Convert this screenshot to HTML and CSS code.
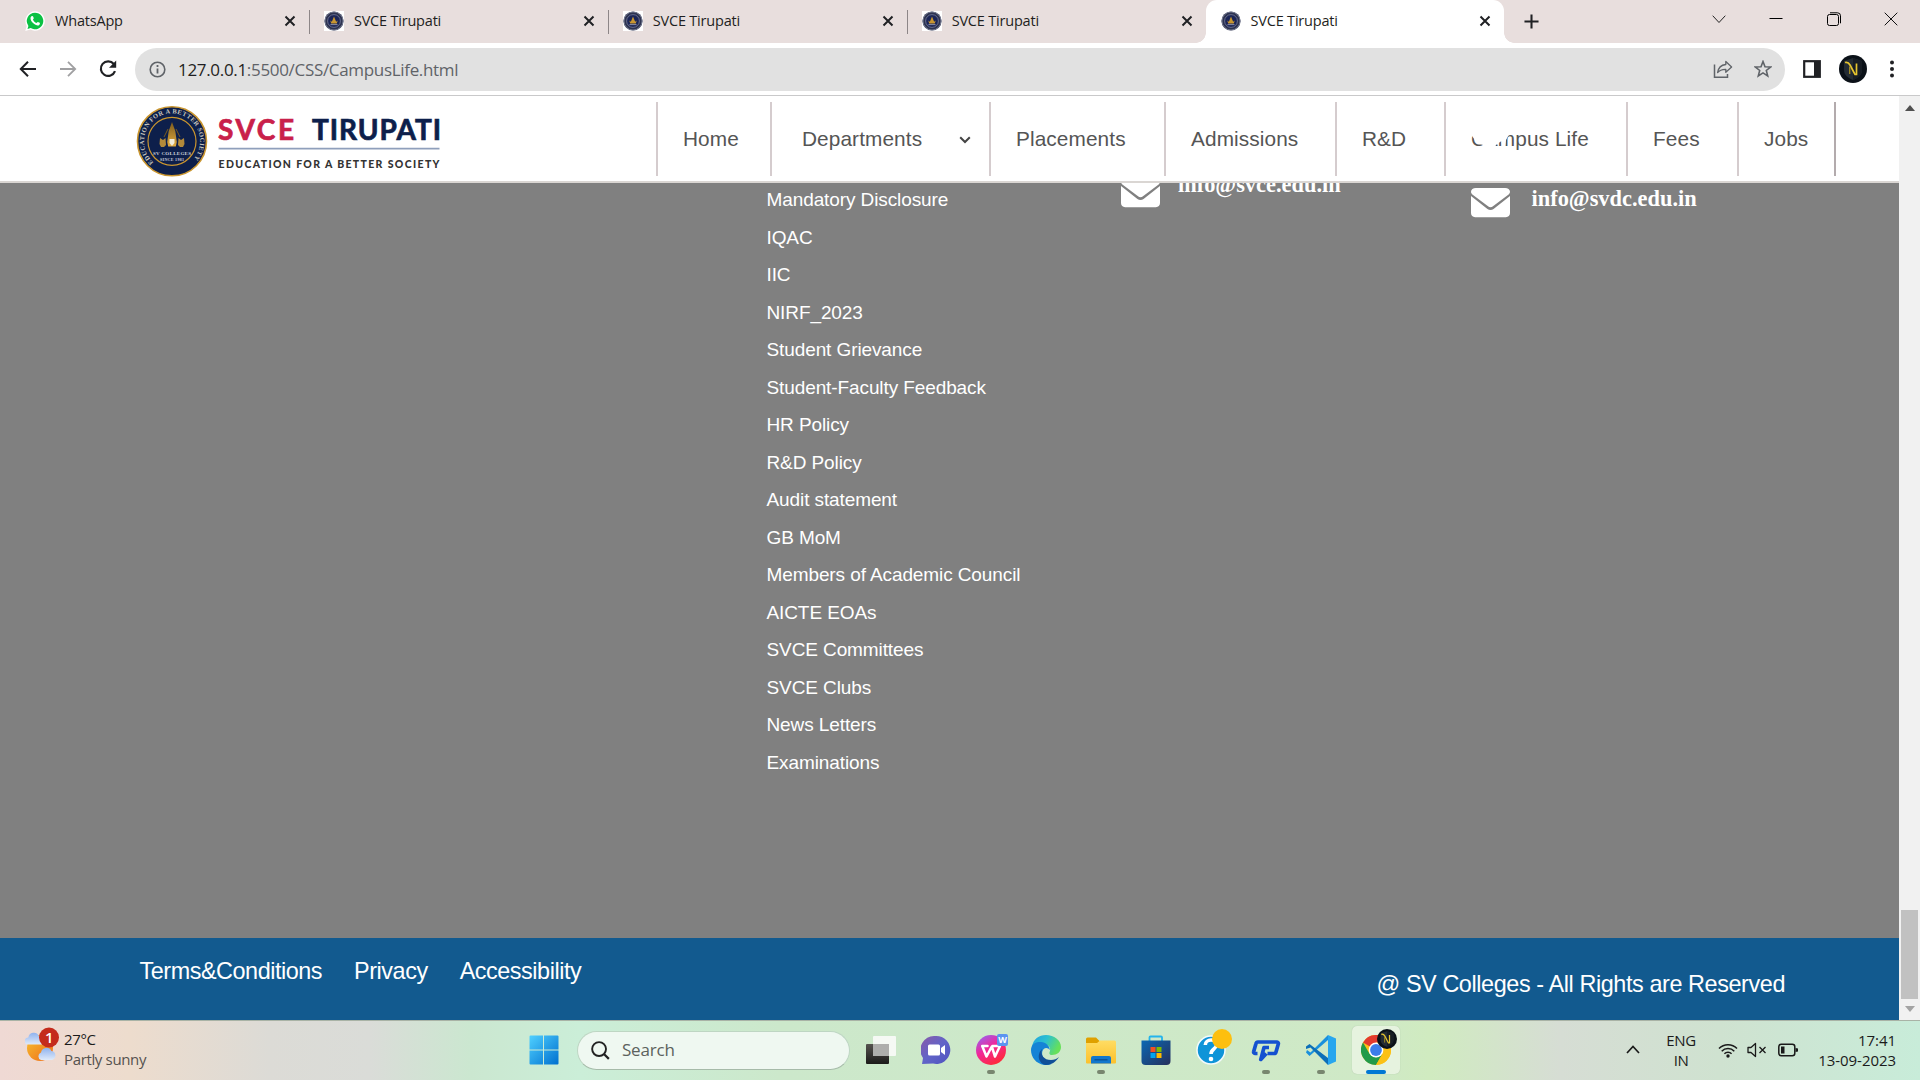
FILE: index.html
```html
<!DOCTYPE html>
<html lang="en">
<head>
<meta charset="utf-8">
<title>SVCE Tirupati</title>
<link rel="stylesheet" href="styles.css">
</head>
<body>
<svg class="defs" width="0" height="0" aria-hidden="true">
  <defs>
    <linearGradient id="gWin" x1="0" y1="0" x2="1" y2="1"><stop offset="0" stop-color="#4fd0ff"/><stop offset="1" stop-color="#0070cf"/></linearGradient>
    <linearGradient id="gChat" x1="0" y1="0" x2="1" y2="1"><stop offset="0" stop-color="#8a5aa8"/><stop offset=".5" stop-color="#6264c8"/><stop offset="1" stop-color="#4f52c0"/></linearGradient>
    <linearGradient id="gWps" x1="0" y1="0" x2=".6" y2="1"><stop offset="0" stop-color="#8a6bff"/><stop offset=".5" stop-color="#f0289a"/><stop offset="1" stop-color="#ff2a3c"/></linearGradient>
    <linearGradient id="gEdge" x1="0" y1="0" x2="1" y2=".4"><stop offset="0" stop-color="#1f9fe0"/><stop offset=".5" stop-color="#2cc0d0"/><stop offset="1" stop-color="#66e05a"/></linearGradient>
    <linearGradient id="gFold" x1="0" y1="0" x2="0" y2="1"><stop offset="0" stop-color="#ffdc63"/><stop offset="1" stop-color="#fcc12c"/></linearGradient>
    <linearGradient id="gStore" x1="0" y1="0" x2="1" y2="1"><stop offset="0" stop-color="#0a68b4"/><stop offset="1" stop-color="#27305c"/></linearGradient>
    <linearGradient id="gTv" x1="0" y1="0" x2="0" y2="1"><stop offset="0" stop-color="#55534f"/><stop offset="1" stop-color="#1c1b1a"/></linearGradient>
    <linearGradient id="gSun" x1="0" y1="0" x2="1" y2="1"><stop offset="0" stop-color="#f7c12f"/><stop offset="1" stop-color="#ee6a1a"/></linearGradient>
    <linearGradient id="gCloud" x1="0" y1="0" x2="0" y2="1"><stop offset="0" stop-color="#8fb2ee"/><stop offset="1" stop-color="#dfeafa"/></linearGradient>
    <linearGradient id="gGold" x1="0" y1="0" x2="0" y2="1"><stop offset="0" stop-color="#7c5b1c"/><stop offset="1" stop-color="#e2ab3f"/></linearGradient>
    <symbol id="close" viewBox="0 0 12 12"><path d="M1.500 1.500l9 9M10.500 1.500l-9 9" stroke="#202124" stroke-width="2" fill="none"/></symbol>
    <symbol id="favicon" viewBox="0 0 20 20">
      <circle cx="10" cy="10" r="9.600" fill="#2d3350"/><circle cx="10" cy="10" r="9" fill="none" stroke="#8e92a6" stroke-width=".7"/>
      <circle cx="10" cy="10" r="6.400" fill="#1b2556" stroke="#777c9c" stroke-width=".8"/>
      <path d="M10 5.500l1.300 3.200 1 2.300H7.700l1-2.300zM6.300 9.500l1.700 1.500h4l1.700-1.500-.9 3H7.200z" fill="#c9962f"/><path d="M6.500 13.600h7" stroke="#aab" stroke-width=".8"/>
    </symbol>
    <symbol id="avatar" viewBox="0 0 28 28">
      <circle cx="14" cy="14" r="14" fill="#0b1118"/><path d="M14 3l9 3v9c0 5-4 8-9 10-5-2-9-5-9-10V6z" fill="#242c34"/><path d="M14 3l9 3v9c0 5-4 8-9 10z" fill="#171d24"/>
      <path d="M6 7.500c2.500-.8 3.800.3 5 2.500l5 9.500h1.500V8.500" fill="none" stroke="#e6c52f" stroke-width="1.700"/><path d="M10.700 19V11.500" stroke="#a58c22" stroke-width="1.300"/>
    </symbol>
    <symbol id="envelope" viewBox="0 64 512 384"><path fill="#fff" d="M64 64C28 64 0 85 0 116c0 14 7 26 18 34l210 158c17 13 39 13 56 0l210-158c11-8 18-20 18-34 0-31-28-52-64-52zM0 172v222c0 33 22 54 54 54h404c32 0 54-21 54-54V172L296 342c-24 18-56 18-80 0z"/></symbol>
  </defs>
</svg>

<div class="tabstrip">
  <div class="tab"><svg class="fav" viewBox="0 0 20 20"><path d="M10 .3a9.700 9.700 0 1 1-4.600 18.200L.3 19.900l1.400-5A9.700 9.700 0 0 1 10 .3z" fill="#fff"/><path d="M10 1.700a8.300 8.300 0 1 1-4.300 15.400L2.500 18l.9-3.100A8.300 8.300 0 0 1 10 1.700z" fill="#0bc143"/><path d="M6.500 5.300c.7-.5 1.300-.4 1.600.3l.6 1.500c.2.600-.7 1.200-.7 1.600.7 1.500 1.900 2.600 3.400 3.200.5 0 1-1.200 1.500-1l1.800.9c.6.300-.1 2-.8 2.400-2.500 1.200-8.600-3.200-8.400-7.200.1-.7.400-1.300 1-1.700z" fill="#fff"/></svg><span class="tab-title">WhatsApp</span><svg class="x"><use href="#close"/></svg></div>
  <div class="tab"><svg class="fav boxed"><use href="#favicon"/></svg><span class="tab-title">SVCE Tirupati</span><svg class="x"><use href="#close"/></svg></div>
  <div class="tab"><svg class="fav boxed"><use href="#favicon"/></svg><span class="tab-title">SVCE Tirupati</span><svg class="x"><use href="#close"/></svg></div>
  <div class="tab last"><svg class="fav boxed"><use href="#favicon"/></svg><span class="tab-title">SVCE Tirupati</span><svg class="x"><use href="#close"/></svg></div>
  <div class="tab active"><svg class="fav"><use href="#favicon"/></svg><span class="tab-title">SVCE Tirupati</span><svg class="x"><use href="#close"/></svg></div>
  <svg class="plus" viewBox="0 0 16 16"><path d="M8 .5v15M.5 8h15" stroke="#202124" stroke-width="2.200"/></svg>
  <div class="window-controls">
    <svg viewBox="0 0 14 14"><path d="M.7 3.700L7 10.500l6.300-6.800" fill="none" stroke="#222"/></svg>
    <svg viewBox="0 0 14 14"><path d="M.5 6.500h13" stroke="#000"/></svg>
    <svg viewBox="0 0 14 14"><rect x=".5" y="2.500" width="11" height="11" rx="2" fill="none" stroke="#000"/><path d="M3 .8h7.500a3 3 0 0 1 3 3v7.500" fill="none" stroke="#000"/></svg>
    <svg viewBox="0 0 14 14"><path d="M.7.7l12.600 12.600M13.300.7L.7 13.300" stroke="#111"/></svg>
  </div>
</div>

<div class="toolbar">
  <div class="history">
    <svg viewBox="0 0 18 18"><path d="M17 9H2M9 1.800L1.800 9 9 16.200" fill="none" stroke="#202124" stroke-width="2"/></svg>
    <svg viewBox="0 0 18 18"><path d="M1 9h15M9 1.800L16.200 9 9 16.200" fill="none" stroke="#a0a0a2" stroke-width="1.800"/></svg>
    <svg viewBox="0 0 18 18"><path d="M14.800 4A7.300 7.300 0 1 0 16 11.200" fill="none" stroke="#202124" stroke-width="2.200"/><path d="M17.200.6v7.200H10z" fill="#202124"/></svg>
  </div>
  <div class="omnibox">
    <svg class="info" viewBox="0 0 17 17"><circle cx="8.500" cy="8.500" r="7.300" fill="none" stroke="#5f6368" stroke-width="1.600"/><path d="M8.500 7.500v5M8.500 4v2" stroke="#5f6368" stroke-width="1.800"/></svg>
    <span class="url"><b>127.0.0.1</b>:5500/CSS/CampusLife.html</span>
    <svg class="share" viewBox="0 0 20 18"><path d="M1.500 4.500v12.800H14.500V14" fill="none" stroke="#5f6368" stroke-width="1.500"/><path d="M12.800 1.500L18.600 7l-5.800 5.200V9.300C9 9.200 6.500 10.200 4.600 12.600 5.200 8.500 7.500 5.100 12.800 4.500z" fill="none" stroke="#5f6368" stroke-width="1.300" stroke-linejoin="round"/></svg>
    <svg class="star" viewBox="0 0 18 18"><path d="M9 1.500l2 5.200 5.600.3-4.300 3.500 1.400 5.400L9 12.900l-4.700 3 1.400-5.400L1.400 7 7 6.700z" fill="none" stroke="#5f6368" stroke-width="1.600"/></svg>
  </div>
  <svg class="panel" viewBox="0 0 18 18"><rect x="1.200" y="1.200" width="15.600" height="15.600" fill="#fff" stroke="#202124" stroke-width="2.200"/><path d="M11 1h6v16h-6z" fill="#202124"/></svg>
  <svg class="profile"><use href="#avatar"/></svg>
  <svg class="dots" viewBox="0 0 4 18"><circle cx="2" cy="2.500" r="2" fill="#202124"/><circle cx="2" cy="9" r="2" fill="#202124"/><circle cx="2" cy="15.500" r="2" fill="#202124"/></svg>
</div>

<div class="viewport">
  <div class="page">
    <header class="site-header">
      <svg class="logo" viewBox="136 96 310 85">
        <circle cx="172" cy="141.300" r="34.500" fill="#0d1f4b" stroke="#c9952f" stroke-width="1.600"/>
        <circle cx="172" cy="141.300" r="24" fill="#0d1f4b" stroke="#c9952f" stroke-width="1.200"/>
        <path id="ring" d="M153.500 162.300a28 28 0 1 1 37 0" fill="none"/>
        <text class="ring-text"><textPath href="#ring" textLength="130">EDUCATION FOR A BETTER SOCIETY</textPath></text>
        <path d="M172 122l1.800 5 1.500 4 1.500 11 -1 4.500h-7.600l-1-4.500 1.500-11 1.500-4z" fill="url(#gGold)"/>
        <path d="M160 138l3 2 2.500-2 .5 7-2 2h-3l-1.500-3zM184 138l-3 2-2.500-2-.5 7 2 2h3l1.500-3z" fill="#b38a3a"/>
        <path d="M169.500 139h5v4l-2.500 3-2.500-3z" fill="#f2ecd9"/>
        <path d="M164 137l4-8M180 137l-4-8" stroke="#7c5b1c"/>
        <text class="seal-name" x="172" y="155" textLength="38">SV COLLEGES</text>
        <text class="seal-year" x="172" y="160.500" textLength="24">SINCE 1981</text>
        <text class="wordmark red" x="218" y="139.800" textLength="76">SVCE</text>
        <text class="wordmark navy" x="312" y="139.800" textLength="129">TIRUPATI</text>
        <path d="M218.500 148.700H439.500" stroke="#8f9fbb" stroke-width="1.800"/>
        <text class="tagline" x="218.500" y="167.600" textLength="221">EDUCATION FOR A BETTER SOCIETY</text>
      </svg>
      <nav class="menu">
        <a class="i-home">Home</a>
        <a class="i-dept">Departments<svg class="chev" viewBox="0 0 12 8"><path d="M1.200 1.200L6 6l4.800-4.800" fill="none" stroke="#444" stroke-width="2"/></svg></a>
        <a class="i-plac">Placements</a>
        <a class="i-admi">Admissions</a>
        <a class="i-rd">R&amp;D</a>
        <a class="i-camp">Campus Life<svg class="handset" viewBox="1468 126 46 22"><path d="M1468 126L1470.500 135 1474 140.500 1477 144 1481.500 144.800 1484 148H1494L1495 144.800 1500.500 141 1501.500 148H1504L1505 140 1509 132.500 1513 126z" fill="#fff"/></svg></a>
        <a class="i-fees">Fees</a>
        <a class="i-jobs">Jobs</a>
      </nav>
    </header>
    <main class="links-area">
      <ul class="links">
        <li>Mandatory Disclosure</li><li>IQAC</li><li>IIC</li><li>NIRF_2023</li><li>Student Grievance</li><li>Student-Faculty Feedback</li><li>HR Policy</li><li>R&amp;D Policy</li><li>Audit statement</li><li>GB MoM</li><li>Members of Academic Council</li><li>AICTE EOAs</li><li>SVCE Committees</li><li>SVCE Clubs</li><li>News Letters</li><li>Examinations</li>
      </ul>
      <div class="contact svce"><svg class="mail"><use href="#envelope"/></svg><span>info@svce.edu.in</span></div>
      <div class="contact svdc"><svg class="mail"><use href="#envelope"/></svg><span>info@svdc.edu.in</span></div>
    </main>
    <footer class="site-footer">
      <div class="legal"><a>Terms&amp;Conditions</a><a>Privacy</a><a>Accessibility</a></div>
      <p class="rights">@ SV Colleges - All Rights are Reserved</p>
    </footer>
  </div>
  <div class="scrollbar">
    <svg class="arrow" viewBox="0 0 10 6"><path d="M0 6L5 0l5 6z" fill="#505050"/></svg>
    <div class="thumb"></div>
    <svg class="arrow down" viewBox="0 0 10 6"><path d="M0 0h10L5 6z" fill="#a3a3a3"/></svg>
  </div>
</div>

<div class="taskbar">
  <div class="weather">
    <svg class="weather-icon" viewBox="0 0 36 38">
      <circle cx="15" cy="21" r="13" fill="url(#gSun)"/>
      <path d="M3 17.500a3.500 3.500 0 0 1 .3-7 5.500 5.500 0 0 1 10.500-1.500 4.500 4.500 0 0 1 3 8.500z" fill="url(#gCloud)"/>
      <path d="M16 33a4 4 0 0 1 0-7.500 5.500 5.500 0 0 1 10.400-1.500A4.600 4.600 0 0 1 27 33z" fill="url(#gCloud)"/>
      <circle cx="24" cy="10.500" r="10" fill="#c42b1c"/><text class="badge-num" x="24" y="16">1</text>
    </svg>
    <div><div class="temp">27°C</div><div class="sky">Partly sunny</div></div>
  </div>
  <div class="apps">
    <div class="cell"><svg viewBox="0 0 30 30"><path d="M1.500.5H14v14H.5V1.500a1 1 0 0 1 1-1zM15 .5h13.500a1 1 0 0 1 1 1v13H15zM.5 15.500H14v14H1.500a1 1 0 0 1-1-1zM15 15.500h14.500v13a1 1 0 0 1-1 1H15z" fill="url(#gWin)"/></svg></div>
    <div class="search"><svg viewBox="0 0 20 20"><circle cx="8.500" cy="8.500" r="7.300" fill="none" stroke="#222" stroke-width="2"/><path d="M13.600 13.600l5.200 5.200" stroke="#222" stroke-width="2.300"/></svg><span>Search</span></div>
    <div class="cell"><svg viewBox="0 0 30 30"><rect x="0" y="9" width="23" height="20" rx="1" fill="url(#gTv)"/><rect x="7" y="1" width="23" height="20" rx="1" fill="#fbfbfb" fill-opacity=".85"/><path d="M7 9h16v12H7z" fill="#aeaeac"/></svg></div>
    <div class="cell"><svg viewBox="0 0 30 30"><path d="M15 1a14 14 0 1 1-3 27.600L1 29l1-6A14 14 0 0 1 15 1z" fill="url(#gChat)"/><rect x="7" y="9.500" width="12" height="11" rx="1.500" fill="#fff"/><path d="M20 13l4-3v10l-4-3z" fill="#fff"/></svg></div>
    <div class="cell run"><svg viewBox="0 0 30 30"><circle cx="15" cy="15" r="15" fill="url(#gWps)"/><path d="M11.500 11H6.200L10.500 21.500 15.800 11.500 19 21.500 24 11H16.500" fill="none" stroke="#fff" stroke-width="2.500" stroke-linejoin="round" stroke-linecap="round"/></svg><i class="wbadge">W</i></div>
    <div class="cell"><svg viewBox="0 0 30 30"><path d="M1 12C2 4 8 0 15 0c8 0 15 5 15 12 0 5-4 8-9 8-3 0-3-2-2-4 1-4-2-7-7-7-6 0-10 3-11 8z" fill="url(#gEdge)"/><path d="M0 15C0 9 5 6.500 10 7c5 .5 9 4 8.700 8-1-2-4-3-6-1-4 4 0 15 8 16C9 32 0 25 0 15z" fill="#1583d6"/><path d="M11 14c-2 6 2 11 9 11 3 0 6-1 8-3-3 5-8 8-13 8-7-1-10-10-4-16z" fill="#104f98"/></svg></div>
    <div class="cell run"><svg viewBox="0 0 30 30"><path d="M0 4a1.500 1.500 0 0 1 1.500-1.500H10L13.500 6H29v4H0z" fill="#dfa000"/><path d="M0 8h11l3-2.500h14.500A1.500 1.500 0 0 1 30 7v20.500a1 1 0 0 1-1 1H1a1 1 0 0 1-1-1z" fill="url(#gFold)"/><path d="M5 28.500V23a2 2 0 0 1 2-2h16a2 2 0 0 1 2 2v5.500z" fill="#1277cc"/><path d="M8.500 24.800h13" stroke="#0a4f93" stroke-width="1.300"/></svg></div>
    <div class="cell"><svg viewBox="0 0 30 30"><path d="M8.500 7V2.500a1 1 0 0 1 1-1h10.500a1 1 0 0 1 1 1V7" fill="none" stroke="#23b4ec" stroke-width="1.800"/><path d="M.5 5.500h29V26a4 4 0 0 1-4 4h-21a4 4 0 0 1-4-4z" fill="url(#gStore)"/><path d="M9.500 12h5v5h-5z" fill="#f25022"/><path d="M15.500 12h5v5h-5z" fill="#7fba00"/><path d="M9.500 18h5v5h-5z" fill="#00a4ef"/><path d="M15.500 18h5v5h-5z" fill="#ffb900"/></svg></div>
    <div class="cell"><svg viewBox="0 0 30 30"><circle cx="15" cy="15" r="14" fill="#0f94d8" stroke="#f2fafc" stroke-width="1.500"/><path d="M9.300 10c0-6.500 11.400-6.500 11.400-.5 0 4.500-5.700 4.500-5.700 9.500" fill="none" stroke="#fff" stroke-width="3.600"/><circle cx="15" cy="24" r="2.300" fill="#fff"/></svg><i class="dot"></i></div>
    <div class="cell run"><svg viewBox="0 0 30 30"><path d="M6.500 18.500H4a1.500 1.500 0 0 1-1.300-2L5 8.500a2 2 0 0 1 2-1.500H26a1.500 1.500 0 0 1 1.300 2l-2.300 8a2 2 0 0 1-2 1.500h-6.500M18 12.500h-5L9.800 24.500l5.500-6" fill="none" stroke="#1450d0" stroke-width="3.700" stroke-linejoin="round"/></svg></div>
    <div class="cell run"><svg viewBox="0 0 30 30"><path d="M22 0L4.500 17.500 1 15 0 17.500 3.500 21 22 5z" fill="#1a90dc"/><path d="M22 30L4.500 12.500 0 14v-2.500L3.500 9 22 23z" fill="#0c6fb8"/><path d="M22 0l8 3.500v23L22 30z" fill="#27a6ee"/></svg></div>
    <div class="cell current"><svg viewBox="0 0 30 30"><circle cx="15" cy="15" r="15" fill="#fbc116"/><path d="M15 15L2 7.500A15 15 0 0 1 28 7.500H15z" fill="#e33b2e"/><path d="M15 30A15 15 0 0 1 2 7.500L8.500 18.700 15 22.500l6.500-3.700z" fill="#229a4a"/><path d="M15 7.500h13A15 15 0 0 1 15 30l6.500-11.200z" fill="#fbc116"/><circle cx="15" cy="15" r="7.400" fill="#fff"/><circle cx="15" cy="15" r="5.900" fill="#3b7de9"/></svg><svg class="mini-avatar"><use href="#avatar"/></svg></div>
  </div>
  <div class="tray">
    <svg class="up" viewBox="0 0 14 9"><path d="M1 8l6-6.500L13 8" fill="none" stroke="#1a1a1a" stroke-width="1.700"/></svg>
    <div class="lang">ENG<br>IN</div>
    <svg class="wifi" viewBox="0 0 20 16"><g fill="none" stroke="#1a1a1a" stroke-width="1.500"><path d="M1 6.500a12.500 12.500 0 0 1 18 0M3.700 9.200a8.800 8.800 0 0 1 12.600 0M6.400 11.800a5 5 0 0 1 7.200 0"/></g><circle cx="10" cy="14" r="1.700" fill="#1a1a1a"/></svg>
    <svg class="vol" viewBox="0 0 20 16"><path d="M1 5.500h3L8.500 1.500v13L4 10.500H1z" fill="none" stroke="#1a1a1a" stroke-width="1.300" stroke-linejoin="round"/><path d="M12.500 5l6 6M18.500 5l-6 6" stroke="#1a1a1a" stroke-width="1.300"/></svg>
    <svg class="bat" viewBox="0 0 20 14"><rect x=".8" y="1.300" width="16" height="11.400" rx="2.500" fill="none" stroke="#1a1a1a" stroke-width="1.500"/><path d="M3 3.500h3.500v7H3zM17.500 5l2.500.5v3l-2.500.5z" fill="#1a1a1a"/></svg>
    <div class="clock">17:41<br>13-09-2023</div>
  </div>
</div>
</body>
</html>
```
FILE: styles.css
```css
* { box-sizing: border-box; }
body { margin: 0; width: 1920px; height: 1080px; overflow: hidden; display: flex; flex-direction: column; font-family: "Open Sans", "Noto Sans", sans-serif; }
svg { display: block; flex: none; }
.defs { position: absolute; }

/* Browser tabs */
.tabstrip { height: 43px; flex: none; background: #e8dedd; display: flex; padding-left: 10px; align-items: flex-start; }
.tab { width: 298.900px; height: 43px; display: flex; align-items: center; padding: 0 13px 1px 15px; position: relative; color: #1f1f22; font-size: 14.500px; }
.tab::after { content: ""; position: absolute; right: -1px; top: 10px; width: 1px; height: 24px; background: #8d8687; }
.tab.last::after { display: none; }
.tab.active { background: #fff; border-radius: 11px 11px 0 0; }
.tab.active::before, .tab.active::after { content: ""; position: absolute; top: auto; bottom: 0; width: 10px; height: 10px; background: radial-gradient(circle at 0 0, #e8dedd 9.500px, #fff 10px); }
.tab.active::before { left: -10px; }
.tab.active::after { right: -10px; background: radial-gradient(circle at 100% 0, #e8dedd 9.500px, #fff 10px); }
.fav { width: 20px; height: 20px; }
.boxed { background: #fff; }
.tab-title { margin: -2px 0 0 10px; flex: 1; letter-spacing: -.2px; }
.x { width: 12px; height: 12px; }
.plus { width: 15px; height: 15px; margin: 14px 0 0 20px; }
.window-controls { margin: 12px 22px 0 auto; display: flex; gap: 43.500px; }
.window-controls svg { width: 14px; height: 14px; }

/* Address row */
.toolbar { height: 53px; flex: none; background: #fff; border-bottom: 1px solid #c9c9ca; display: flex; align-items: center; padding: 0 26px 0 18.500px; }
.history { display: flex; gap: 22px; width: 116.500px; }
.history svg { width: 18px; height: 18px; }
.omnibox { width: 1650px; height: 43px; border-radius: 22px; background: #e1e1e1; display: flex; align-items: center; padding: 0 13px 0 14px; }
.info { width: 17px; height: 17px; }
.url { margin-left: 12px; flex: 1; font-size: 17px; letter-spacing: -.32px; color: #5f6368; }
.url b { font-weight: 400; color: #1f1f22; }
.share { width: 20px; height: 18px; }
.star { width: 18px; height: 18px; margin-left: 21px; }
.panel { width: 18px; height: 18px; margin-left: 18px; }
.profile { width: 28px; height: 28px; margin-left: 18px; }
.dots { width: 4px; height: 18px; margin-left: auto; }

/* Site */
.viewport { height: 924px; flex: none; display: flex; }
.page { width: 1899px; display: flex; flex-direction: column; font-family: "Liberation Sans", Arial, sans-serif; }
.site-header { height: 87px; flex: none; background: #fff; border-bottom: 2px solid #dad6d3; display: flex; padding: 0 63px 0 136px; justify-content: space-between; position: relative; z-index: 1; }
.logo { width: 310px; height: 85px; }
.ring-text { font: 700 6.500px "Liberation Serif", serif; fill: #c9c6bd; }
.seal-name { font: 700 5px "Liberation Serif", serif; fill: #cfd3de; text-anchor: middle; }
.seal-year { font: 700 4px "Liberation Serif", serif; fill: #cfd3de; text-anchor: middle; }
.wordmark { font: 700 28px Lato, sans-serif; stroke-width: .7px; }
.red { fill: #c9204a; stroke: #c9204a; }
.navy { fill: #0d1f4b; stroke: #0d1f4b; }
.tagline { font: 900 10.500px Lato, sans-serif; fill: #333; }
.menu { display: flex; padding-top: 6px; }
.menu a { height: 74px; border-left: 2px solid #d5ccce; display: flex; align-items: center; color: #555; font-size: 20.800px; letter-spacing: .1px; position: relative; white-space: nowrap; }
.i-home { width: 114px; padding-left: 25px; }
.i-dept { width: 219px; padding-left: 30px; }
.i-plac { width: 175px; padding-left: 25px; }
.i-admi { width: 171px; padding-left: 25px; }
.i-rd { width: 109px; padding-left: 25px; }
.i-camp { width: 182px; padding-left: 25px; }
.i-fees { width: 111px; padding-left: 25px; }
.menu .i-jobs { width: 99px; padding-left: 25px; border-right: 2px solid #b3abad; }
.chev { width: 12px; height: 8px; margin: 2px 0 0 37px; }
.handset { position: absolute; left: 23px; top: 24px; width: 46px; height: 22px; }
.links-area { height: 755px; flex: none; background: #808080; display: flex; align-items: flex-start; padding-left: 766.500px; color: #fff; }
.links { list-style: none; margin: -2px 0 0; padding: 0; width: 354.500px; font-size: 19px; line-height: 37.500px; letter-spacing: -.1px; }
.contact { display: flex; align-items: flex-start; width: 349.500px; font: 700 22.400px "Liberation Serif", "Times New Roman", serif; line-height: 24px; }
.mail { width: 39px; height: 31px; }
.svce { margin-top: -6px; }
.svdc { margin-top: 3.500px; }
.svce span { margin: -4px 0 0 18px; }
.svdc span { margin-left: 22px; }
.site-footer { height: 82px; flex: none; background: #125a8f; color: #fff; font-size: 23.400px; display: flex; justify-content: space-between; padding: 20px 114px 0 139.500px; }
.legal { display: flex; gap: 32px; line-height: 27px; letter-spacing: -.45px; }
.rights { margin: 13px 0 0; line-height: 27px; letter-spacing: -.4px; }
.scrollbar { width: 21px; background: #f1f1f1; display: flex; flex-direction: column; align-items: center; padding: 9px 0 8px; }
.arrow { width: 10px; height: 6px; }
.thumb { width: 17px; height: 89px; margin-top: auto; background: #c1c1c1; }
.down { margin-top: 7px; }

/* Taskbar */
.taskbar { height: 60px; flex: none; border-top: 1px solid #a9b3a6; display: flex; position: relative; background: linear-gradient(90deg, #efd9d4 0, #eddccd 130px, #dcdbd6 270px, #dadcd8 370px, #cbe7d0 470px, #cbeed8 580px, #cce8cb 780px, #cfe9c6 1380px, #d0ebc0 1430px, #d6ddd4 1560px, #cfe2d0 1720px, #c8ecd9 1920px); }
.weather { display: flex; padding: 6px 0 0 25px; width: 520px; font-size: 15px; line-height: 20px; letter-spacing: -.35px; }
.weather-icon { width: 36px; height: 38px; margin-right: 3px; }
.badge-num { font: 600 15px "Open Sans", sans-serif; fill: #fff; text-anchor: middle; }
.temp { color: #1b1b1b; padding-top: 2px; }
.sky { color: #55524e; }
.apps { display: flex; gap: 7px; padding-top: 5px; }
.cell { width: 48px; height: 48px; display: grid; place-items: center; position: relative; border-radius: 5px; }
.cell > svg { width: 30px; height: 30px; }
.run::after { content: ""; position: absolute; left: 20px; bottom: 0; width: 8px; height: 4px; border-radius: 2px; background: #78866f; }
.current { background: #e6f3df; box-shadow: 0 0 1px #a6b8a0; }
.current::after { content: ""; position: absolute; left: 14px; bottom: 0; width: 20px; height: 4px; border-radius: 2px; background: #0078d4; }
.cell .mini-avatar { position: absolute; left: 25px; top: 3px; width: 20px; height: 20px; }
.wbadge { position: absolute; left: 30px; top: 8px; width: 11px; height: 12px; border-radius: 2px; background: #5b94f0; color: #fff; font: 700 9px/12px "Open Sans", sans-serif; text-align: center; }
.dot { position: absolute; left: 25px; top: 3px; width: 20px; height: 20px; border-radius: 50%; background: #fdbf0f; }
.search { width: 273px; height: 39px; margin: 5px 0 0 2px; border-radius: 20px; background: #eff8f1; border: 1px solid #bed6c3; border-bottom-color: #a6bba9; display: flex; align-items: center; padding-left: 13px; color: #5c625d; font-size: 17px; }
.search svg { width: 19px; height: 19px; margin-right: 12px; }
.search span { letter-spacing: -.2px; margin-top: -2px; }
.tray { position: absolute; right: 24px; top: 0; height: 57px; display: flex; align-items: center; color: #1b1b1b; font-size: 15px; line-height: 20px; }
.up { width: 14px; height: 9px; }
.lang { width: 40px; margin-left: 21px; text-align: center; letter-spacing: -.4px; }
.wifi { width: 20px; height: 16px; margin-left: 17px; }
.vol { width: 20px; height: 16px; margin-left: 9px; }
.bat { width: 20px; height: 14px; margin-left: 11px; }
.clock { width: 98px; text-align: right; letter-spacing: -.05px; white-space: nowrap; }
```
